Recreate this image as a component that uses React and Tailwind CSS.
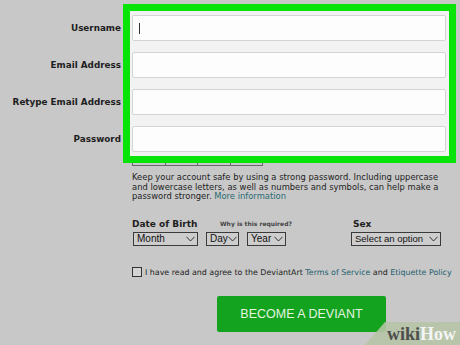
import React from "react";

function Chevron() {
  return (
    <svg width="9" height="6" viewBox="0 0 9 6" className="shrink-0">
      <path d="M0.5 0.8 L4.5 5 L8.5 0.8" fill="none" stroke="#333" strokeWidth="1" />
    </svg>
  );
}

function FakeSelect({ label, width, size = "text-[10px]" }) {
  return (
    <div
      className={`${width} h-[14px] flex items-center justify-between pl-[3px] pr-[2px] border border-[#3a3a3a] bg-[#cdcdcd] ${size} leading-none text-[#111] whitespace-nowrap`}
      style={{ fontFamily: '"Liberation Sans", Arial, sans-serif' }}
    >
      <span>{label}</span>
      <Chevron />
    </div>
  );
}

export default function App() {
  const labels = ["Username", "Email Address", "Retype Email Address", "Password"];

  return (
    <div
      className="relative w-[460px] h-[345px] overflow-hidden bg-[#c8c8c8] text-[#1e1e1e]"
      style={{ fontFamily: '"DejaVu Sans", Verdana, sans-serif' }}
    >
      {/* top: labels + highlighted inputs */}
      <div className="flex pt-[4px]">
        <div className="w-[121px] pt-[12px] flex flex-col items-end gap-[11px]">
          {labels.map((l) => (
            <div key={l} className="h-[26px] flex items-center text-[8.8px] font-bold whitespace-nowrap">
              {l}
            </div>
          ))}
        </div>
        <div className="ml-[2px] w-[333px] border-[7px] border-[#08e408] bg-[#f2f2f2] pt-[4px] pb-[4px] pl-[2px] pr-[3px] flex flex-col gap-[11px]">
          {labels.map((l, i) => (
            <div
              key={l}
              className="h-[26px] bg-[#fdfdfd] border border-[#d4d4d4] rounded-[2px] flex items-center pl-[6px]"
            >
              {i === 0 && <div className="w-px h-[11px] bg-[#333]" />}
            </div>
          ))}
        </div>
      </div>

      {/* strength meter peeking out */}
      <div className="ml-[132px] w-[131px] h-[3px] flex">
        {[0, 1, 2, 3].map((i) => (
          <div
            key={i}
            className={`flex-1 border-b border-r border-[#6a6a6a] ${i === 0 ? "border-l" : ""}`}
          />
        ))}
      </div>

      <p className="ml-[132px] mt-[7px] text-[8.4px] leading-[9.5px] text-[#222] whitespace-nowrap">
        Keep your account safe by using a strong password. Including uppercase
        <br />
        and lowercase letters, as well as numbers and symbols, can help make a
        <br />
        password stronger. <span className="text-[#2a6b74]">More information</span>
      </p>

      {/* date of birth / sex labels */}
      <div className="mt-[17px] h-[12px] flex items-center">
        <div className="ml-[132px] w-[88px] text-[9px] font-bold">Date of Birth</div>
        <div className="w-[133px] text-[6px] font-bold text-[#444] -mt-[2px]">Why is this required?</div>
        <div className="text-[9px] font-bold">Sex</div>
      </div>

      <div className="mt-[1px] flex">
        <div className="ml-[133px] flex gap-[8px]">
          <FakeSelect label="Month" width="w-[65px]" />
          <FakeSelect label="Day" width="w-[33px]" />
          <FakeSelect label="Year" width="w-[39px]" />
        </div>
        <div className="ml-[65px]">
          <FakeSelect label="Select an option" width="w-[90px]" size="text-[9.5px]" />
        </div>
      </div>

      {/* terms */}
      <div className="mt-[21px] ml-[132px] flex items-center">
        <div className="w-[10px] h-[10px] border border-[#333] bg-[#d4d4d4]" />
        <div className="ml-[3px] text-[7.9px] whitespace-nowrap text-[#222]">
          I have read and agree to the DeviantArt{" "}
          <span className="text-[#235f6c]">Terms of Service</span> and{" "}
          <span className="text-[#235f6c]">Etiquette Policy</span>
        </div>
      </div>

      <div className="mt-[18px] ml-[217px] w-[169px] h-[36px] rounded-[2px] bg-[#13a31e] flex items-center justify-center">
        <span
          className="text-[12.5px] text-[#e6f4e0]"
          style={{ fontFamily: '"Liberation Sans", Arial, sans-serif' }}
        >
          BECOME A DEVIANT
        </span>
      </div>

      {/* wikiHow watermark */}
      <svg className="absolute right-0 bottom-0" width="95" height="23" viewBox="0 0 95 23">
        <polygon points="20,0 95,0 95,23 0,23" fill="#b6c4a6" fillOpacity="0.9" />
      </svg>
      <div
        className="absolute right-[4px] bottom-[2px] text-[18px] font-bold leading-none"
        style={{ fontFamily: '"Liberation Serif", "Times New Roman", serif' }}
      >
        <span className="text-[#4d4d4d]">wiki</span>
        <span className="text-[#f4f4f4]">How</span>
      </div>
    </div>
  );
}
